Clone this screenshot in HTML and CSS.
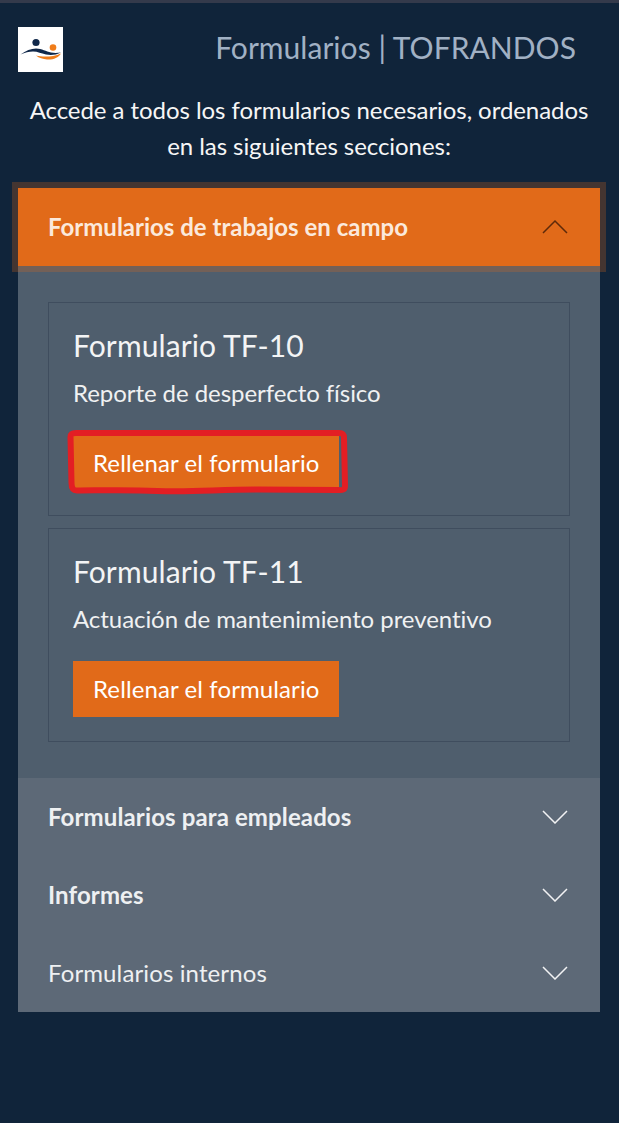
FILE: index.html
```html
<!DOCTYPE html>
<html lang="es">
<head>
<meta charset="UTF-8">
<title>Formularios | TOFRANDOS</title>
<link rel="stylesheet" href="styles.css">
</head>
<body>
  <div class="topline"></div>
  <div class="page">
    <header class="header">
      <svg class="logo" viewBox="0 0 45 45" aria-hidden="true">
        <rect width="45" height="45" fill="#fff"/>
        <circle cx="18" cy="15.5" r="3.6" fill="#10284a"/>
        <circle cx="35" cy="20.5" r="3.3" fill="#f07d1a"/>
        <path d="M2.5 27.5C8 23.5 13 21.5 18 21.5C24 21.5 28 24.5 33 25.5C36 26 39 26 43 25.5C38 28 33 28.5 28 27.5C23 26.5 20 24.5 15 24.5C11 24.5 7 25.5 2.5 27.5Z" fill="#10284a"/>
        <path d="M18 28.5C24 30 34 30.5 43 26.5C40 31 35 33 29 32.5C25 32.2 21 31 18 28.5Z" fill="#f07d1a"/>
      </svg>
      <h1 class="title">Formularios | TOFRANDOS</h1>
    </header>
    <p class="intro">Accede a todos los formularios necesarios, ordenados en las siguientes secciones:</p>

    <div class="accordion">
      <div class="acc-head active">
        <span class="bold">Formularios de trabajos en campo</span>
        <svg class="chev chev-up" viewBox="0 0 26 15"><path d="M1 14L13 2L25 14"/></svg>
      </div>
      <div class="acc-body">
        <div class="card">
          <h2 class="card-title">Formulario TF-10</h2>
          <p class="card-text">Reporte de desperfecto físico</p>
          <div class="btn-wrap">
            <a class="btn">Rellenar el formulario</a>
            <svg class="scribble" viewBox="0 0 282 66" preserveAspectRatio="none">
              <path d="M3.5 7C3.5 4 5 3 9 3L272 3C276 3 277 4.5 277 8L278 56C278 59.5 276 60.5 271 60L190 59.5C150 59.5 125 62.5 90 61C60 59.5 30 60.5 10 60.5C6 60.5 4.5 58 4.5 53Z"/>
            </svg>
          </div>
        </div>
        <div class="card">
          <h2 class="card-title">Formulario TF-11</h2>
          <p class="card-text">Actuación de mantenimiento preventivo</p>
          <div class="btn-wrap"><a class="btn">Rellenar el formulario</a></div>
        </div>
      </div>
      <div class="acc-head">
        <span class="bold wide">Formularios para empleados</span>
        <svg class="chev" viewBox="0 0 26 15"><path d="M1 2L13 14L25 2"/></svg>
      </div>
      <div class="acc-head">
        <span class="bold wide">Informes</span>
        <svg class="chev" viewBox="0 0 26 15"><path d="M1 2L13 14L25 2"/></svg>
      </div>
      <div class="acc-head">
        <span class="wide">Formularios internos</span>
        <svg class="chev" viewBox="0 0 26 15"><path d="M1 2L13 14L25 2"/></svg>
      </div>
    </div>
  </div>
</body>
</html>
```

FILE: styles.css
```css
* { box-sizing: border-box; }
body {
  margin: 0;
  min-height: 1123px;
  background: #10243a;
  color: #fff;
  font-family: Lato, sans-serif;
}
.topline { height: 3px; background: #343a4b; }
.page { padding: 24px 19px 0 18px; }
.header {
  display: flex;
  align-items: flex-start;
  justify-content: space-between;
  padding-right: 24px;
}
.logo { width: 45px; height: 45px; display: block; }
.title {
  margin: -2px 0 0;
  font-size: 30px;
  line-height: 44px;
  font-weight: 400;
  letter-spacing: 0.04px;
  color: #a1b1c4;
}
.intro {
  margin: 20px 0 0;
  font-size: 24px;
  line-height: 36px;
  letter-spacing: -0.06px;
  text-align: center;
  color: #f6f6f6;
  padding-bottom: 24px;
}
.acc-head {
  display: flex;
  align-items: center;
  justify-content: space-between;
  height: 78px;
  padding: 0 32px 2px 30px;
  font-size: 24px;
  background: #5d6977;
  color: #eef0f2;
}
.acc-head.active {
  position: relative;
  background: #e16a19;
  box-shadow: 0 0 0 6px rgba(225, 105, 25, 0.25);
  color: #fbe9dc;
}
.bold { font-weight: 700; }
.wide { letter-spacing: 0.12px; }
.chev { width: 26px; height: 15px; display: block; }
.chev path { fill: none; stroke: #f2f3f4; stroke-width: 1.5; }
.chev-up path { stroke: #5e2a0a; }
.acc-body {
  background: #4f5e6d;
  padding: 36px 30px;
  display: flex;
  flex-direction: column;
  gap: 12px;
}
.card {
  height: 214px;
  border: 1px solid #3f4d5e;
  padding: 22px 24px 0;
}
.card-title {
  margin: 0;
  font-size: 30px;
  line-height: 40px;
  font-weight: 400;
  letter-spacing: 0.1px;
  color: #f3f4f5;
}
.card-text {
  margin: 13px 0 0;
  font-size: 24px;
  line-height: 30px;
  letter-spacing: -0.06px;
  color: #f0f1f2;
}
.btn-wrap {
  position: relative;
  display: inline-block;
  margin-top: 27px;
}
.btn {
  display: block;
  background: #e16a19;
  color: #fff;
  font-size: 24px;
  line-height: 56px;
  letter-spacing: 0.1px;
  padding: 0 20px;
}
.scribble {
  position: absolute;
  left: -6px;
  top: -5px;
  width: 282px;
  height: 66px;
}
.scribble path { fill: none; stroke: #e31e24; stroke-width: 6; stroke-linejoin: round; }
```
